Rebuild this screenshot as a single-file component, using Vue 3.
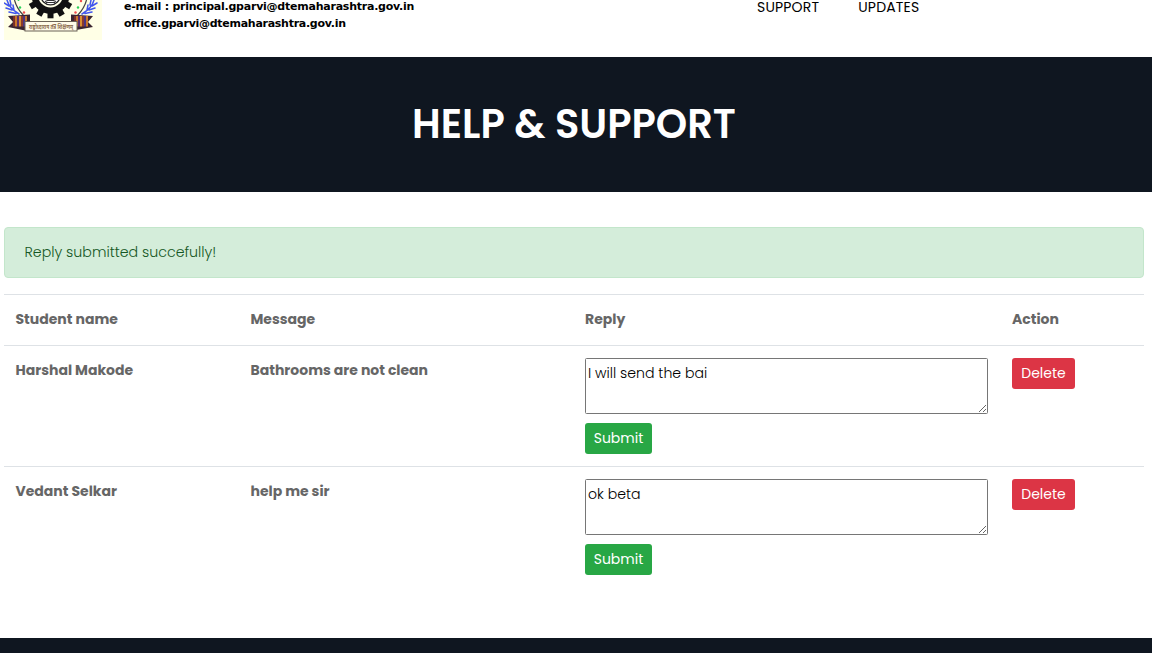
<script setup>
const rows = [
  { name: 'Harshal Makode', message: 'Bathrooms are not clean', reply: 'I will send the bai' },
  { name: 'Vedant Selkar', message: 'help me sir', reply: 'ok beta' },
]
const teeth = Array.from({ length: 12 }, (_, i) => i * 30)
const stripes = ['#7a2f2a', '#c9762a', '#5b2f6a', '#d98f33', '#8a3a2e', '#4a3585', '#c9762a']
</script>

<template>
  <div class="page">
    <header class="top">
      <svg class="logo" width="98" height="40" viewBox="0 0 98 40">
        <rect width="98" height="40" fill="#ffffe6" />
        <path d="M10.500 0q2 8 9 15.500M82.500 0q-2 8-9 15.500" fill="none" stroke="#444" stroke-width="1.200" />
        <g fill="none" stroke="#4055ee" stroke-width="1.500" stroke-linecap="round">
          <path d="M3 0q2 8 12 14M0 3l5 3M2 8l6 2M5 12l7 1.500M6 0l1 5M9 5l1 5" />
          <path d="M90 0q-2 8-12 14M93 3l-5 3M91 8l-6 2M88 12l-7 1.500M87 0l-1 5M84 5l-1 5" />
        </g>
        <g fill="#29d05a"><circle cx="16" cy="7.500" r="1.200" /><circle cx="74" cy="7.500" r="1.200" /><circle cx="14.500" cy="0" r="1" /></g>
        <g fill="#f04a4a"><circle cx="20" cy="12.500" r="1.200" /><circle cx="71.500" cy="12.500" r="1.200" /><circle cx="77" cy="1" r="1.200" /></g>
        <g transform="translate(46.500 -5)" fill="#111">
          <rect v-for="a in teeth" :key="a" x="-3" y="17" width="6" height="6.300" :transform="`rotate(${a})`" />
          <circle r="19" />
          <circle r="12.500" fill="#ffffe6" />
          <circle r="9.800" fill="#fff" stroke="#222" stroke-width="1.300" />
        </g>
        <path d="M41 1.500l5.500-2 5.500 2M42 2.500h9" fill="none" stroke="#333" stroke-width="1.200" />
        <path d="M4 16l22-1.500v13l-5 3-17-3.500 5-5z" fill="#3a2430" />
        <path d="M89 16l-22-1.500v6.500l5 0v9l17-3-5-5z" fill="#3a2430" />
        <rect v-for="(c, i) in stripes" :key="'l' + i" :x="9 + i * 2" y="16" width="2" height="10.500" :fill="c" />
        <rect v-for="(c, i) in stripes" :key="'r' + i" :x="70 + i * 2" y="16" width="2" height="10.500" :fill="c" />
        <rect x="21" y="21.500" width="52" height="9.500" fill="#fffbe8" stroke="#6b6257" />
        <text x="25" y="28.500" class="motto" textLength="44" lengthAdjust="spacingAndGlyphs">राष्ट्रोध्दाराय तंत्र शिक्षणम्</text>
      </svg>
      <p class="mail"><span>e-mail : principal.gparvi@dtemaharashtra.gov.in</span><br><span class="office">office.gparvi@dtemaharashtra.gov.in</span></p>
      <nav><a>SUPPORT</a><a>UPDATES</a></nav>
    </header>
    <section class="hero"><h1>HELP &amp; SUPPORT</h1></section>
    <main>
      <div class="alert">Reply submitted succefully!</div>
      <table>
        <colgroup><col class="c1"><col class="c2"><col class="c3"><col class="c4"></colgroup>
        <thead><tr><th>Student name</th><th>Message</th><th>Reply</th><th>Action</th></tr></thead>
        <tbody>
          <tr v-for="r in rows" :key="r.name">
            <th>{{ r.name }}</th>
            <th>{{ r.message }}</th>
            <td><textarea :value="r.reply" spellcheck="false"></textarea><button class="submit">Submit</button></td>
            <td><button class="delete">Delete</button></td>
          </tr>
        </tbody>
      </table>
    </main>
    <footer></footer>
  </div>
</template>

<style>
body { margin: 0; overflow: hidden; background: #fff; }
</style>

<style scoped>
* { box-sizing: border-box; }
.page { height: 653px; display: flex; flex-direction: column; overflow: hidden; font: 14px/24px Poppins, sans-serif; color: #666; }
.top { height: 57px; flex: none; display: flex; align-items: flex-start; padding-left: 4px; }
.logo { display: block; flex: none; }
.motto { font: bold 7px "Noto Sans", sans-serif; fill: #8a6a4a; }
.mail { margin: -2px 0 0 22px; width: 633px; font: bold 11px/17px "DejaVu Sans", sans-serif; letter-spacing: -0.235px; color: #000; white-space: nowrap; }
.office { letter-spacing: -0.275px; }
nav { display: flex; gap: 39px; color: #000; letter-spacing: 0.18px; }
nav a { display: block; line-height: 15px; }
.hero { height: 135px; flex: none; background: #0f1620; display: flex; justify-content: center; padding: 43px 4px 0 0; }
h1 { margin: 0; font-size: 40px; line-height: 48px; font-weight: 600; color: #fff; white-space: nowrap; }
main { padding: 35px 8px 0 4px; flex: 1; }
.alert { height: 51px; border: 1px solid #c3e6cb; border-radius: 4px; background: #d4edda; color: #155724; padding: 12px 19.500px; margin-bottom: 16px; font-weight: 300; font-size: 14.200px; }
table { width: 1140px; border-collapse: separate; border-spacing: 0; table-layout: fixed; }
.c1 { width: 235px; }
.c2 { width: 334px; }
.c3 { width: 427px; }
.c4 { width: 144px; }
th, td { border-top: 1px solid #dee2e6; padding: 12px 12px 0; vertical-align: top; text-align: left; }
th { font-weight: 700; }
th:nth-child(-n+2) { padding-left: 11.500px; }
thead tr { height: 51px; }
tbody tr { height: 121px; }
textarea { display: block; width: 403px; height: 56px; margin: 0 0 9px; padding: 2px; border: 1px solid #767676; border-radius: 1.500px; font: 300 14.100px/24px Poppins, sans-serif; color: #000; resize: both; }
button { display: block; height: 31px; padding: 0; border: 0; border-radius: 3px; color: #fff; font: 14px/21px Poppins, sans-serif; }
.submit { width: 67px; background: #28a745; }
.delete { width: 63px; background: #dc3545; }
footer { height: 15px; flex: none; background: #0f1620; }
</style>
